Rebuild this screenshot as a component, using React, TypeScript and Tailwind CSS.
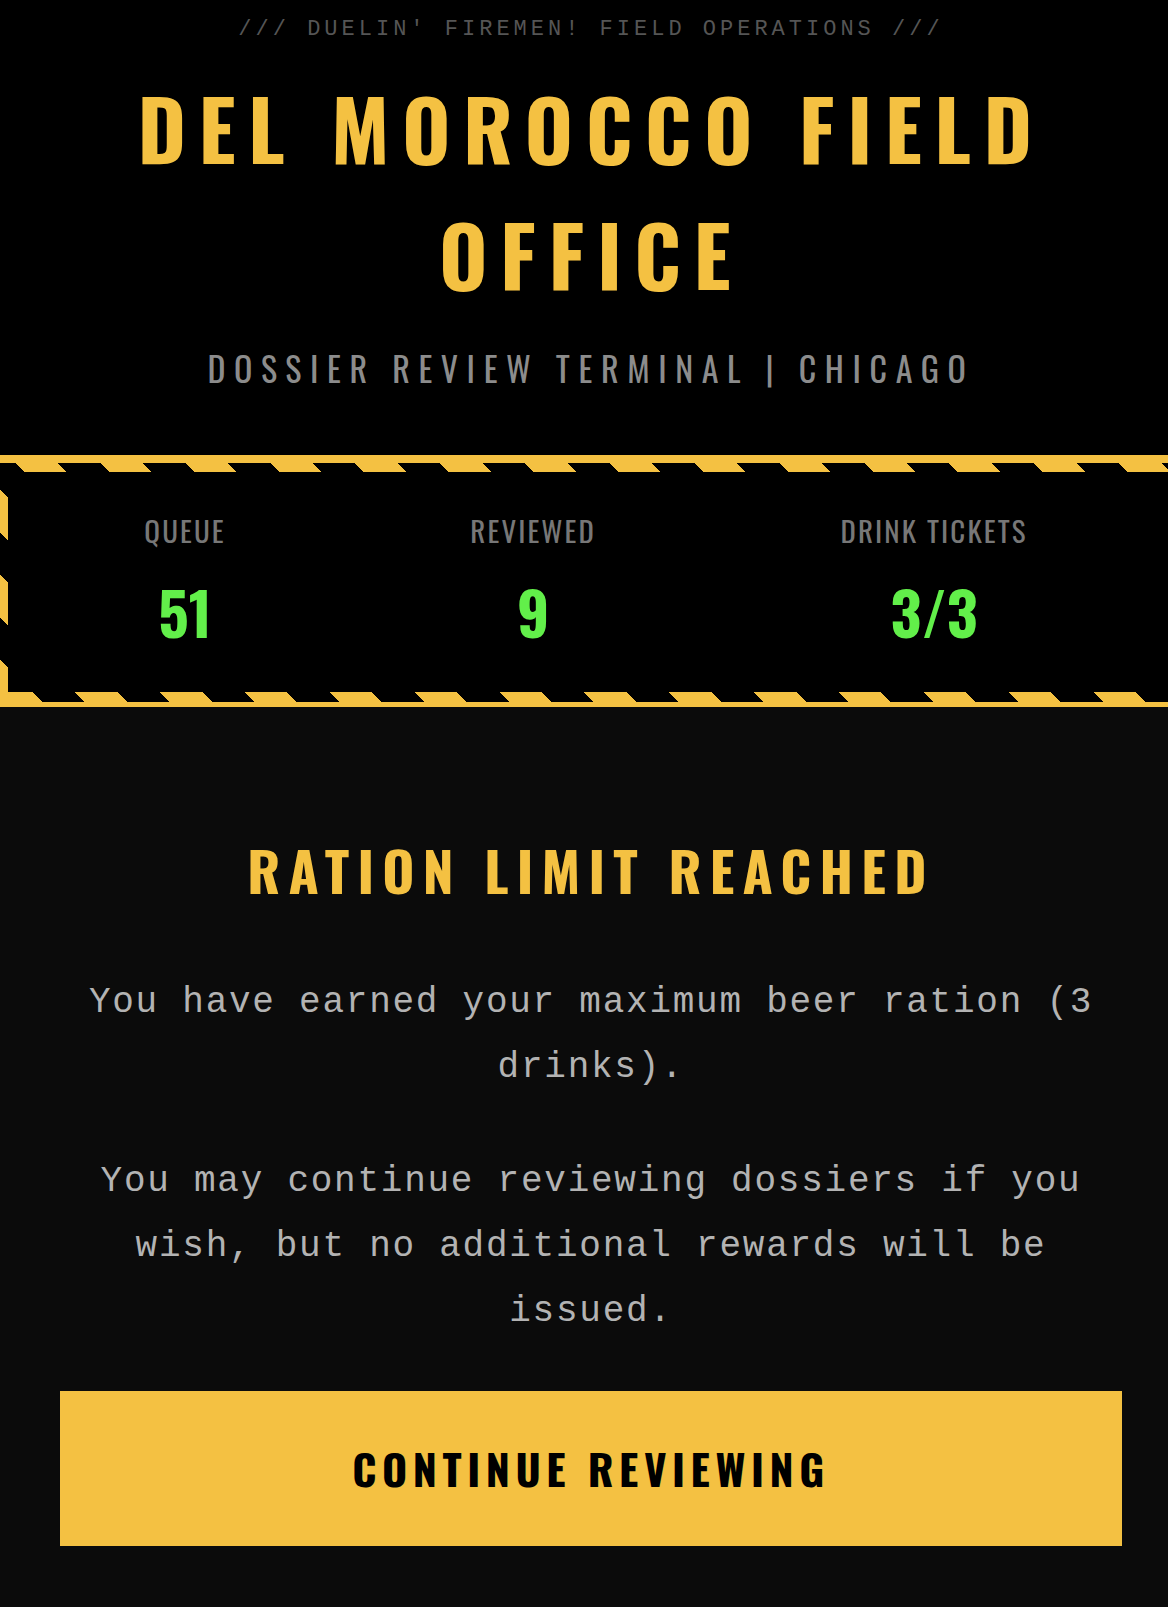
const stats = [
  { label: 'QUEUE', value: '51' },
  { label: 'REVIEWED', value: '9' },
  { label: 'DRINK TICKETS', value: '3/3' },
];

function Stat({ label, value }: { label: string; value: string }) {
  return (
    <div className="flex flex-col items-center font-[Oswald,sans-serif]">
      <span className="text-[29px] leading-[43px] tracking-[2.1px] text-[#777777]">{label}</span>
      <span className="mt-[24px] text-[60px] leading-[72px] font-bold text-[#62ef4a]">{value}</span>
    </div>
  );
}

export default function App() {
  return (
    <div className="min-h-screen overflow-hidden bg-[#0b0b0b]">
      <div className="w-[1182px]">
        {/* Header */}
        <header className="bg-black pt-[16px] pb-[62px] text-center">
          <p className="font-['Liberation_Mono',monospace] text-[22px] leading-[28px] tracking-[4px] text-[#555555]">
            /// DUELIN' FIREMEN! FIELD OPERATIONS ///
          </p>
          <h1 className="mx-auto mt-[21px] max-w-[1000px] font-[Oswald,sans-serif] text-[83px] leading-[126px] font-bold tracking-[0.15em] text-[#f4c142]">
            DEL MOROCCO FIELD OFFICE
          </h1>
          <p className="mt-[25px] font-[Oswald,sans-serif] text-[34px] leading-[51px] tracking-[8.6px] text-[#8c8c8c]">
            DOSSIER REVIEW TERMINAL | CHICAGO
          </p>
        </header>

        {/* Hazard stats panel */}
        <section className="border-t-[8px] border-b-[5px] border-[#f4c142] bg-[repeating-linear-gradient(45deg,#f4c142_0_30px,#000_30px_60px)] pt-[9px] pl-[8px] pr-[8px] pb-[10px]">
          <div className="flex justify-around bg-black pl-[14px] pr-[24px] pt-[36px] pb-[45px]">
            {stats.map((s) => (
              <Stat key={s.label} label={s.label} value={s.value} />
            ))}
          </div>
        </section>

        {/* Ration notice */}
        <main className="bg-[#0b0b0b] px-[60px] pt-[125px] pb-[62px] text-center">
          <h2 className="font-[Oswald,sans-serif] text-[55px] leading-[75px] font-bold tracking-[0.15em] text-[#f4c142]">
            RATION LIMIT REACHED
          </h2>
          <p className="mt-[63px] font-['Liberation_Mono',monospace] text-[36px] leading-[65px] tracking-[1.75px] text-[#b3b3b3]">
            You have earned your maximum beer ration (3 drinks).
          </p>
          <p className="mt-[49px] font-['Liberation_Mono',monospace] text-[36px] leading-[65px] tracking-[1.75px] text-[#b3b3b3]">
            You may continue reviewing dossiers if you wish, but no additional rewards will be issued.
          </p>
          <button
            type="button"
            className="mt-[47px] flex h-[155px] w-full items-center justify-center bg-[#f4c142] font-[Oswald,sans-serif] text-[43px] font-bold tracking-[0.13em] text-black"
          >
            CONTINUE REVIEWING
          </button>
        </main>
      </div>
    </div>
  );
}
